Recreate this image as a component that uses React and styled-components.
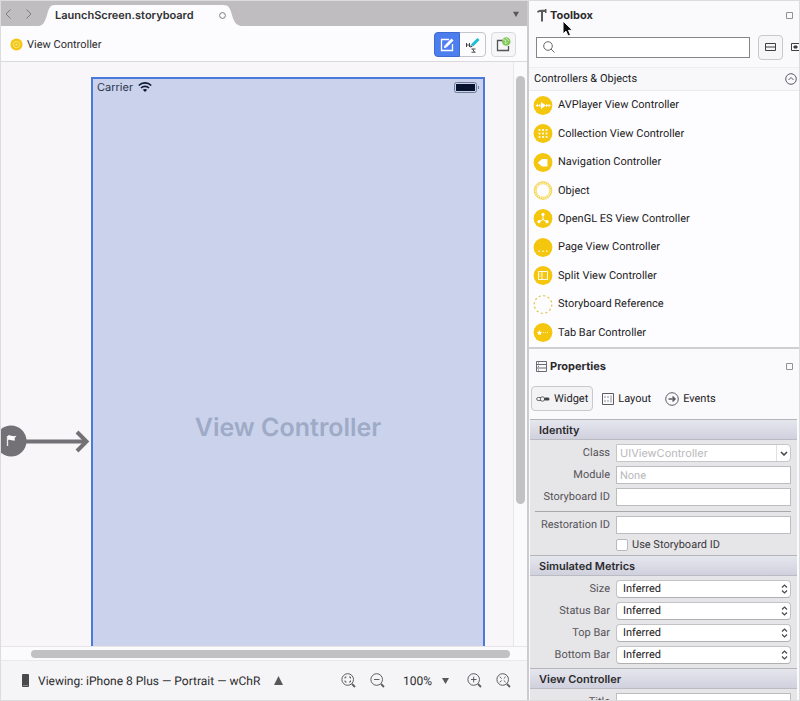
import React from "react";
import styled, { createGlobalStyle, css } from "styled-components";

const UI = `Roboto, "Liberation Sans", sans-serif`;
const DISPLAY = `Inter, "Liberation Sans", sans-serif`;

const Global = createGlobalStyle`
  *, *::before, *::after { box-sizing: border-box; }
  html, body { margin: 0; height: 100%; }
  body { font: 11px/16px ${UI}; color: #2b2b2d; background: #f9f8fb; overflow: hidden; text-rendering: geometricPrecision; }
  button, input, select { font: inherit; color: inherit; margin: 0; padding: 0; text-rendering: inherit; }
  button { background: none; border: 0; display: inline-flex; align-items: center; justify-content: center; }
  h2, h3 { margin: 0; font-size: 11px; line-height: 16px; }
  svg { display: block; flex: none; }
`;

const Window = styled.div`
  display: grid;
  grid-template-columns: minmax(0, 1fr) 272px;
  height: 100vh;
  border: 1px solid #dcdbdd;
`;

/* Editor */
const Editor = styled.main`
  display: grid;
  grid-template-rows: 25px 36px minmax(0, 1fr) 13px 40px;
  min-width: 0;
`;
const TabStrip = styled.div`
  display: flex;
  align-items: center;
  background: #bfbdc0;
  padding-right: 8px;
`;
const NavButton = styled.button`
  width: 20px;
  height: 25px;
  padding-right: 6px;
`;
const Tab = styled.div`
  display: grid;
  align-self: end;
  width: 202px;
  height: 21px;
  margin-left: -2px;
  > * { grid-area: 1 / 1; }
`;
const TabLabel = styled.div`
  display: flex;
  align-items: center;
  justify-content: space-between;
  padding: 0 15px 1px 16px;
  font-family: ${DISPLAY};
  font-size: 11px;
  font-weight: 600;
  color: #303033;
`;
const Spacer = styled.span`
  flex: 1;
`;
const Toolbar = styled.div`
  display: flex;
  align-items: center;
  gap: 4px;
  padding: 2px 11px 0 9px;
  border-bottom: 1px solid #dad9dc;
  background: #fcfbfd;
`;
const Segments = styled.div`
  display: flex;
  border: 1px solid #c5c5c9;
  border-radius: 4px;
  height: 25px;
  margin-right: 1px;
`;
const Segment = styled.button`
  width: 25px;
  height: 25px;
  margin: -1px 0;
  ${(p) =>
    p.$on &&
    css`
      width: 26px;
      margin-left: -1px;
      background: #4d7eee;
      border: 1px solid #3f6bd0;
      border-radius: 4px 0 0 4px;
    `}
`;
const IconButton = styled.button`
  width: 25px;
  height: 25px;
  border: 1px solid ${(p) => (p.$strong ? "#c9c8cb" : "#dad9dc")};
  border-radius: 4px;
  background: #f6f5f7;
`;
const Canvas = styled.div`
  display: grid;
  grid-template-columns: 90px minmax(0, 1fr) 28px 14px;
  background: #f8f6f9;
  border-bottom: 1px solid #e6e5e8;
  overflow: hidden;
`;
const EntryPoint = styled.div`
  padding-top: 363px;
`;
const Device = styled.section`
  margin-top: 15px;
  border: 2px solid #4b7adb;
  border-bottom: 0;
  background: #cbd3ec;
  overflow: hidden;
`;
const StatusRow = styled.div`
  display: flex;
  align-items: center;
  gap: 5px;
  height: 16px;
  padding: 0 3px 0 4px;
  font-family: ${DISPLAY};
  font-size: 11px;
  color: #27324b;
`;
const DeviceTitle = styled.div`
  margin-top: 317px;
  text-align: center;
  font-family: ${DISPLAY};
  font-size: 25px;
  line-height: 32px;
  font-weight: 600;
  color: #9eaac6;
`;
const VTrack = styled.div`
  grid-column: 4;
  border-left: 1px solid #e8e6e9;
  padding: 14px 2px 0;
  background: #faf9fb;
`;
const VThumb = styled.div`
  width: 9px;
  height: 428px;
  border-radius: 5px;
  background: #c2c1c3;
`;
const HTrack = styled.div`
  padding: 3px 17px 0 30px;
  background: #fbfafc;
`;
const HThumb = styled.div`
  height: 8px;
  border-radius: 4px;
  background: #c1c0c2;
`;
const StatusBar = styled.footer`
  display: flex;
  align-items: center;
  padding: 0 16px 0 20px;
  border-top: 1px solid #e9e8eb;
  background: #f5f4f6;
  font-size: 12px;
`;
const Viewing = styled.button`
  gap: 8px;
  white-space: nowrap;
  svg:last-child { margin-left: 6px; }
`;
const ZoomGroup = styled.div`
  display: flex;
  align-items: center;
  gap: 14px;
  margin-left: auto;
`;
const ZoomLevel = styled.button`
  gap: 10px;
  margin: 0 4px;
`;

/* Side panels */
const Side = styled.aside`
  display: flex;
  flex-direction: column;
  min-width: 0;
  overflow: hidden;
  border-left: 2px solid #cccbce;
  background: #faf9fc;
`;
const PanelHead = styled.header`
  display: flex;
  align-items: center;
  gap: 3px;
  height: 28px;
  padding: 0 6px 0 7px;
  h2 { flex: 1; font-family: ${DISPLAY}; font-weight: 700; }
`;
const SearchRow = styled.div`
  display: flex;
  align-items: center;
  gap: 8px;
  height: 38px;
  padding: 0 0 2px 7px;
`;
const SearchBox = styled.label`
  display: flex;
  align-items: center;
  gap: 4px;
  width: 215px;
  height: 21px;
  padding-left: 6px;
  border: 1px solid #858488;
  background: #fff;
  input { flex: 1; min-width: 0; border: 0; outline: 0; background: none; }
`;
const GroupHead = styled.button`
  justify-content: space-between;
  flex: none;
  height: 24px;
  padding: 0 2px 0 5px;
  border-top: 1px solid #eeedf0;
  border-bottom: 1px solid #ebeaed;
  background: #f8f8fb;
  color: #1d1d1f;
`;
const List = styled.ul`
  display: grid;
  grid-auto-rows: 1fr;
  flex: none;
  height: 256px;
  margin: 0;
  padding: 0;
  list-style: none;
  background: #fdfcfe;
  color: #1d1d1f;
`;
const Item = styled.li`
  display: flex;
  align-items: center;
  gap: 5px;
  padding-left: 4px;
`;
const PropHead = styled.div`
  flex: none;
  border-top: 2px solid #d0cfd2;
  padding-top: 3px;
`;
const PropTabs = styled.div`
  display: flex;
  gap: 4px;
  padding: 6px 2px 0;
  height: 39px;
  color: #1d1d1f;
`;
const PropTab = styled.button`
  gap: 4px;
  height: 25px;
  padding: 0 4px;
  border: 1px solid ${(p) => (p.$on ? "#c9c8cb" : "transparent")};
  border-radius: 4px;
  background: ${(p) => (p.$on ? "#f3f2f5" : "none")};
`;
const PropBody = styled.div`
  flex: 1;
  min-height: 0;
  overflow: hidden;
  margin: 0 2px 0 1px;
  background: #e6e5e8;
`;
const SectionHead = styled.h3`
  height: 21px;
  padding: 2px 9px;
  border-top: 1px solid #b5b4b9;
  border-bottom: 1px solid #bcbbc2;
  background: linear-gradient(#e6e6ee, #d0d1de);
  font-family: ${DISPLAY};
  font-weight: 600;
`;
const Fields = styled.div`
  display: grid;
  grid-template-columns: 79px 1fr;
  column-gap: 6px;
  row-gap: 4px;
  align-items: center;
  padding: 4px 6px 4px 1px;
`;
const Label = styled.label`
  text-align: right;
  line-height: 18px;
  color: #555458;
`;
const TextInput = styled.input`
  width: 100%;
  min-width: 0;
  height: 18px;
  padding: 0 3px;
  border: 1px solid #bdbcbf;
  border-radius: 0;
  background: #fff;
  outline: 0;
  &::placeholder { color: #b9b8bb; opacity: 1; }
`;
const Combo = styled.div`
  display: flex;
  height: 18px;
  border: 1px solid #c6c5c8;
  border-radius: 0 4px 4px 0;
  background: #fff;
  overflow: hidden;
  input { border: 0; height: 16px; font-family: ${DISPLAY}; }
  button { width: 14px; border-left: 1px solid #e0dfe2; flex: none; }
`;
const Rule = styled.hr`
  grid-column: 1 / -1;
  width: 256px;
  margin: 1px 0 0 4px;
  border: 0;
  border-top: 1px solid #a8a7aa;
`;
const Check = styled.label`
  grid-column: 2;
  display: flex;
  align-items: center;
  gap: 4px;
  height: 13px;
  color: #3a393d;
  input {
    appearance: none;
    width: 12px;
    height: 12px;
    border: 1px solid #bab9bc;
    border-radius: 2px;
    background: #fff;
  }
`;
const SelectBox = styled.div`
  display: grid;
  align-items: center;
  > * { grid-area: 1 / 1; }
  svg { justify-self: end; margin-right: 3px; pointer-events: none; }
`;
const Select = styled.select`
  appearance: none;
  width: 100%;
  height: 18px;
  padding: 0 6px;
  border: 1px solid #c3c2c5;
  border-bottom-color: #b0afb2;
  border-radius: 4px;
  background: #fff;
  color: #222224;
`;
const Pointer = styled.svg`
  position: absolute;
  left: 562px;
  top: 20px;
`;

/* Icons */
const Chevron = ({ d }) => (
  <svg width="7" height="10" fill="none" stroke="#7d7c80"><path d={d} /></svg>
);
const Square = () => (
  <svg width="7" height="7" fill="none" stroke="#929195"><path d="M.5.5h6v6h-6z" /></svg>
);
const Triangle = ({ up, size = 7 }) => (
  <svg width={size} height={size} viewBox="0 0 8 8" fill="#58575a">
    <path d={up ? "M4 0 8 8H0z" : "M0 1h8L4 8z"} />
  </svg>
);

const glyphs = {
  av: <path fill="#fff" d="M7.500 6v7l5-3.500zM2 9.500l2.500-1.500v3zM4.500 9.500 7 8v3zM17.500 9.500 15 8v3zM15 9.500 12.500 8v3z" />,
  grid: <path fill="#fff" opacity=".8" d="M5 5h2v2H5zM8.500 5h2v2h-2zM12 5h2v2h-2zM5 8.500h2v2H5zM8.500 8.500h2v2h-2zM12 8.500h2v2h-2zM5 12h2v2H5zM8.500 12h2v2h-2zM12 12h2v2h-2z" />,
  nav: <path fill="#fff" d="M4.200 9.700 8.500 6H14v7.500H8.500z" />,
  gl: (
    <g fill="#fff" stroke="#fff">
      <path fill="none" d="M9.500 5.500v5L5 13M9.500 10.500 14 13" />
      <circle cx="9.500" cy="5.500" r="1.200" /><circle cx="5.500" cy="12.700" r="1.200" /><circle cx="13.500" cy="12.700" r="1.200" />
    </g>
  ),
  page: <path fill="#fff" opacity=".8" d="M5 12.500h1.500V14H5zM8.700 12.500h1.500V14H8.700zM12.500 12.500H14V14h-1.500z" />,
  split: <path fill="none" stroke="#fff" opacity=".9" d="M5 5.500h9v8H5zM8.500 5.500v8M6 8h1M6 10h1" />,
  tab: <path fill="#fff" d="m6 7 .8 1.700 1.900.2-1.400 1.300.4 1.900L6 11.200l-1.700.9.4-1.900-1.400-1.300 1.900-.2zM9.500 9.200h1v.8h-1zM11.500 9.200h1v.8h-1zM13.500 9.200h1v.8h-1z" />,
};
const Disc = ({ kind }) => (
  <svg width="20" height="19" viewBox="0 0 19 19">
    {kind === "object" ? (
      <g fill="none" stroke="#f3cf30">
        <circle cx="9.500" cy="9.500" r="8.800" strokeWidth=".9" />
        <circle cx="9.500" cy="9.500" r="6.800" strokeWidth=".7" />
        <circle cx="9.500" cy="9.500" r="7.800" strokeWidth="1.300" strokeDasharray="1 1.200" />
      </g>
    ) : kind === "ref" ? (
      <circle cx="9.500" cy="9.500" r="8.800" fill="none" stroke="#dfc64e" strokeWidth="1.200" strokeDasharray="2.200 2.400" />
    ) : (
      <>
        <circle cx="9.500" cy="9.500" r="9.400" fill="#f4c60e" />
        {glyphs[kind]}
      </>
    )}
  </svg>
);
const Lens = ({ children }) => (
  <svg width="15" height="15" fill="none" stroke="#5d5c60">
    <circle cx="6.700" cy="6.500" r="5.800" />
    <path d="m11 11 3 3" strokeWidth="1.800" />
    {children}
  </svg>
);

const items = [
  ["av", "AVPlayer View Controller"],
  ["grid", "Collection View Controller"],
  ["nav", "Navigation Controller"],
  ["object", "Object"],
  ["gl", "OpenGL ES View Controller"],
  ["page", "Page View Controller"],
  ["split", "Split View Controller"],
  ["ref", "Storyboard Reference"],
  ["tab", "Tab Bar Controller"],
];
const metrics = ["Size", "Status Bar", "Top Bar", "Bottom Bar"];

const TextField = ({ id, label, placeholder }) => (
  <>
    <Label htmlFor={id}>{label}</Label>
    <TextInput id={id} placeholder={placeholder} />
  </>
);

function EditorPane() {
  return (
    <Editor>
      <TabStrip>
        <NavButton aria-label="Back"><Chevron d="M5.500.5 1 5l4.500 4.500" /></NavButton>
        <NavButton aria-label="Forward"><Chevron d="M1.500.5 6 5 1.500 9.500" /></NavButton>
        <Tab>
          <svg width="202" height="21" fill="#fcfbfd">
            <path d="M0 21C5 20 6 16 8 10 10 3 11 0 16 0H184C190 0 191 3 193 10 195 17 197 20 202 21z" />
          </svg>
          <TabLabel>
            LaunchScreen.storyboard
            <svg width="7" height="7" fill="none" stroke="#7b7a7e"><circle cx="3.500" cy="3.500" r="2.900" /></svg>
          </TabLabel>
        </Tab>
        <Spacer />
        <button aria-label="Open tabs"><Triangle size={6} /></button>
      </TabStrip>
      <Toolbar>
        <svg width="13" height="13">
          <circle cx="6.500" cy="6.500" r="6" fill="#f4c60e" />
          <circle cx="6.500" cy="6.500" r="3.200" fill="none" stroke="#fae388" />
          <path d="M5.500 5.500h2v2h-2z" fill="#fae388" />
        </svg>
        View Controller
        <Spacer />
        <Segments>
          <Segment $on aria-label="Edit widgets">
            <svg width="15" height="15" fill="none" stroke="#fff">
              <path d="M9 2.500H1.500v11h11V7" strokeWidth="1.300" />
              <path d="m6 9 6.500-6.500" strokeWidth="2.800" />
              <path d="m4.500 10.500 2-.5-1.500-1.500z" fill="#fff" />
            </svg>
          </Segment>
          <Segment aria-label="Edit constraints">
            <svg width="16" height="16" fill="none">
              <path d="m7 8.500 6.500-6.500" stroke="#19bfd5" strokeWidth="3" />
              <path d="m5 10.500 2.500-.7-1.700-1.800z" fill="#353b3e" />
              <path d="M1.500 6v4M4.500 6v4M1.500 8h3M6.500 12h4M6.500 15.200h4M7.500 12l2 3" stroke="#454448" />
            </svg>
          </Segment>
        </Segments>
        <IconButton aria-label="Add preview">
          <svg width="15" height="15" fill="none">
            <path d="M7 3.500H1.500v10h11V9" stroke="#545356" strokeWidth="1.300" />
            <circle cx="10.200" cy="4.500" r="4.300" fill="#83c85c" />
            <path d="m7 2.500 3 1-1 2.500M10 1l3 3M9 7l2.500-1.500" stroke="#c9eab5" />
          </svg>
        </IconButton>
      </Toolbar>
      <Canvas>
        <EntryPoint>
          <svg width="90" height="32" fill="none">
            <circle cx="10" cy="16" r="15.500" fill="#737175" />
            <path d="M6.500 11v10" stroke="#e9e8ea" strokeWidth="1.300" />
            <path d="M7 10.500c3-.8 3.500 1.500 8.500.3l-2 2.500.5 2.200c-3 .6-4-1.500-7-.5z" fill="#fff" />
            <path d="M25 16.500h59" stroke="#737175" strokeWidth="4" />
            <path d="m76 7 9.500 9.500L76 26" stroke="#737175" strokeWidth="4" />
          </svg>
        </EntryPoint>
        <Device>
          <StatusRow>
            Carrier
            <svg width="14" height="10" fill="none" stroke="#0c1730" strokeWidth="1.700">
              <path d="M.8 3.500c3.500-3.400 8.900-3.400 12.400 0M3 6c2.200-2.100 5.800-2.100 8 0" />
              <path d="M4.800 7.800 7 10l2.200-2.200c-1.300-1-3.100-1-4.400 0z" fill="#0c1730" stroke="none" />
            </svg>
            <Spacer />
            <svg width="26" height="11" fill="none">
              <rect x=".5" y=".5" width="22" height="10" rx="2" stroke="#707b94" />
              <rect x="2" y="2" width="19" height="7" fill="#07122f" />
              <path d="M24.500 4v3" stroke="#707b94" />
            </svg>
          </StatusRow>
          <DeviceTitle>View Controller</DeviceTitle>
        </Device>
        <VTrack><VThumb /></VTrack>
      </Canvas>
      <HTrack><HThumb /></HTrack>
      <StatusBar>
        <Viewing>
          <svg width="9" height="15"><rect x="1" y="1" width="7" height="13" rx="1" fill="#4a494c" /><path d="M2 12.500h5" stroke="#88878a" /></svg>
          Viewing: iPhone 8 Plus — Portrait — wChR
          <Triangle up size={9} />
        </Viewing>
        <ZoomGroup>
          <button aria-label="Zoom to fit">
            <Lens><path d="M4 5.500V4h1.500M8 4h1.500v1.500M9.500 7.500V9H8M5.500 9H4V7.500" /></Lens>
          </button>
          <button aria-label="Zoom out"><Lens><path d="M4 6.500h5.500" /></Lens></button>
          <ZoomLevel>100%<Triangle /></ZoomLevel>
          <button aria-label="Zoom in"><Lens><path d="M4 6.500h5.500M6.700 3.700v5.600" /></Lens></button>
          <button aria-label="Actual size">
            <Lens><path d="m3.800 3.800 1.800 1.700M9.600 3.800 7.800 5.500M9.600 9.200 7.800 7.500M3.800 9.200l1.800-1.700" /></Lens>
          </button>
        </ZoomGroup>
      </StatusBar>
    </Editor>
  );
}

function Toolbox() {
  return (
    <>
      <PanelHead>
        <svg width="11" height="13"><path d="M1 2.500C3 .6 5 .8 9 .8v-.8h1.500v4H9V3H7v9.500H5V3C3.500 2.700 2.500 3 2 4z" fill="#5b5a5d" /></svg>
        <h2>Toolbox</h2>
        <button aria-label="Dock toolbox"><Square /></button>
      </PanelHead>
      <SearchRow>
        <SearchBox>
          <svg width="12" height="12" fill="none" stroke="#68676b">
            <circle cx="5" cy="5" r="4.300" /><path d="m8 8 3.500 3.500" />
          </svg>
          <input type="search" aria-label="Search toolbox" />
        </SearchBox>
        <IconButton $strong aria-label="List view">
          <svg width="11" height="8" fill="none" stroke="#3e3d40"><path d="M.5.5h10v7H.5zM.5 4h10" /></svg>
        </IconButton>
        <svg width="8" height="8" fill="none" stroke="#3e3d40"><path d="M8 .5H.5v7H8" /><path d="M3 3h3v2H3z" fill="#3e3d40" /></svg>
      </SearchRow>
      <GroupHead aria-expanded="true">
        Controllers &amp; Objects
        <svg width="12" height="12" fill="none" stroke="#5d5c60"><circle cx="6" cy="6" r="5.300" /><path d="m3.500 7 2.500-2.500L8.500 7" /></svg>
      </GroupHead>
      <List>
        {items.map(([kind, name]) => (
          <Item key={kind}><Disc kind={kind} />{name}</Item>
        ))}
      </List>
    </>
  );
}

function Properties() {
  return (
    <>
      <PropHead>
        <PanelHead>
          <svg width="11" height="11" fill="none" stroke="#6b6a6e"><path d="M.5.5h10v10H.5zM.5 3.500h10M.5 7h10M2 2h1M2 5.300h1M2 9h1" /></svg>
          <h2>Properties</h2>
          <button aria-label="Dock properties"><Square /></button>
        </PanelHead>
        <PropTabs>
          <PropTab $on>
            <svg width="14" height="6" fill="none" stroke="#6a696d">
              <path d="M5 1.500H2.200a1.500 1.500 0 0 0 0 3H5" /><circle cx="6.500" cy="3" r="2.200" />
              <path d="M9.500 3h2.500" stroke="#444347" strokeWidth="3" strokeLinecap="round" />
            </svg>
            Widget
          </PropTab>
          <PropTab>
            <svg width="12" height="12" fill="none" stroke="#5d5c60"><path d="M.5.5h11v11H.5z" /><path d="M3 3v2M3 7v2M6 3v2M6 7v2M9 2.500v7" stroke="#929195" /></svg>
            Layout
          </PropTab>
          <PropTab>
            <svg width="14" height="14" fill="none" stroke="#5d5c60"><circle cx="7" cy="7" r="6.300" /><path d="M3.500 7H10M7.500 4.500 10 7 7.500 9.500" strokeWidth="1.500" /></svg>
            Events
          </PropTab>
        </PropTabs>
      </PropHead>
      <PropBody>
        <SectionHead>Identity</SectionHead>
        <Fields>
          <Label htmlFor="class">Class</Label>
          <Combo>
            <TextInput id="class" placeholder="UIViewController" />
            <button aria-label="Show classes">
              <svg width="8" height="5" fill="none" stroke="#444347" strokeWidth="1.500"><path d="m1 1 3 3 3-3" /></svg>
            </button>
          </Combo>
          <TextField id="module" label="Module" placeholder="None" />
          <TextField id="storyboard" label="Storyboard ID" />
          <Rule />
          <TextField id="restoration" label="Restoration ID" />
          <Check><input type="checkbox" />Use Storyboard ID</Check>
        </Fields>
        <SectionHead>Simulated Metrics</SectionHead>
        <Fields>
          {metrics.map((name) => (
            <React.Fragment key={name}>
              <Label htmlFor={name}>{name}</Label>
              <SelectBox>
                <Select id={name}><option>Inferred</option></Select>
                <svg width="7" height="10" fill="none" stroke="#4a494c" strokeWidth="1.200"><path d="M1 3.500 3.500 1 6 3.500M1 6.500 3.500 9 6 6.500" /></svg>
              </SelectBox>
            </React.Fragment>
          ))}
        </Fields>
        <SectionHead>View Controller</SectionHead>
        <Fields>
          <TextField id="title" label="Title" />
        </Fields>
      </PropBody>
    </>
  );
}

export default function App() {
  return (
    <Window>
      <Global />
      <EditorPane />
      <Side>
        <Toolbox />
        <Properties />
      </Side>
      <Pointer width="12" height="18">
        <path d="M1 1v13l3-2.800 2 4.800 2.500-1-2-4.700h4z" fill="#0c0c0e" stroke="#fff" />
      </Pointer>
    </Window>
  );
}
